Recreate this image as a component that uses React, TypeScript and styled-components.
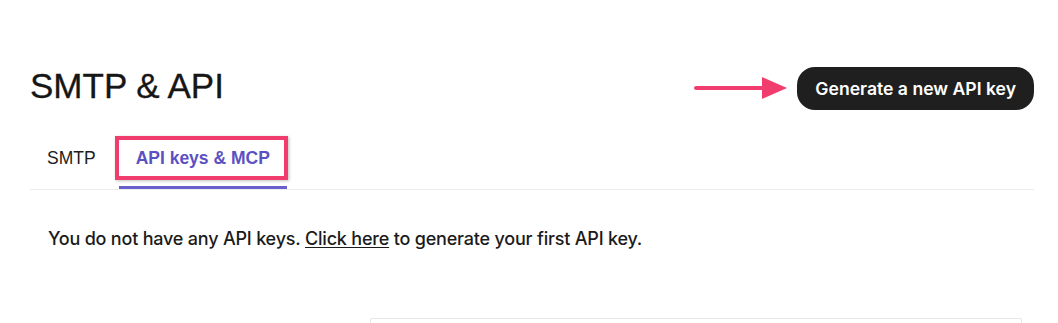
import React, { useState } from 'react'
import styled, { createGlobalStyle } from 'styled-components'

const GlobalStyle = createGlobalStyle`
  html, body {
    margin: 0;
    padding: 0;
    background: #ffffff;
  }

  body {
    font-family: Inter, 'Liberation Sans', sans-serif;
    color: #1b1b1b;
  }
`

const Page = styled.div`
  padding: 66px 24px 0 30px;
  overflow: hidden;
  height: 323px;
  box-sizing: border-box;
`

const Header = styled.header`
  display: flex;
  align-items: center;
  justify-content: space-between;
`

const Title = styled.h1`
  margin: 0 0 4px;
  font-family: 'Liberation Sans', Arial, sans-serif;
  font-size: 35px;
  font-weight: 400;
  color: #161616;
  -webkit-text-stroke: 0.3px #161616;
`

const Actions = styled.div`
  display: flex;
  align-items: center;
  gap: 8px;
`

const PrimaryButton = styled.button`
  height: 43px;
  padding: 0 18px;
  border: none;
  border-radius: 18px;
  background: #1f1f1f;
  color: #ffffff;
  font-family: Inter, 'Liberation Sans', sans-serif;
  font-size: 17.6px;
  font-weight: 600;
  cursor: pointer;
`

const TabList = styled.nav`
  display: flex;
  gap: 6px;
  margin-top: 20px;
  border-bottom: 1px solid #ececec;
`

const Tab = styled.button<{ $active?: boolean }>`
  position: relative;
  height: 59px;
  padding: 0 17px;
  border: none;
  border-bottom: 3px solid ${(p) => (p.$active ? '#6a5fcd' : 'transparent')};
  background: none;
  font-family: 'Liberation Sans', Arial, sans-serif;
  font-size: 17.5px;
  font-weight: ${(p) => (p.$active ? 700 : 400)};
  color: ${(p) => (p.$active ? '#5b51c2' : '#1d1d1d')};
  cursor: pointer;
`

// pink annotation frame drawn over the active tab
const Highlight = styled.span`
  position: absolute;
  left: -4px;
  right: -1px;
  top: 6px;
  height: 44px;
  box-sizing: border-box;
  border: 4px solid #f13d6e;
  box-shadow: 1px 1px 3px rgba(0, 0, 0, 0.25);
  pointer-events: none;
`

const Message = styled.p`
  margin: 36px 0 0 18px;
  font-size: 18px;
  font-weight: 500;
  line-height: 26px;
  color: #1b1b1b;
  letter-spacing: -0.2px;
`

const Link = styled.a`
  color: inherit;
  text-decoration: underline;
  text-underline-offset: 2px;
  cursor: pointer;
`

const Card = styled.div`
  margin: 66px 12px 0 340px;
  height: 40px;
  border: 1px solid #e8e8e8;
  border-radius: 2px;
`

const Arrow = () => (
  <svg width="95" height="26" viewBox="0 0 95 26">
    <line x1="2" y1="13" x2="72" y2="13" stroke="#f13d6e" strokeWidth="4" strokeLinecap="round" />
    <polygon points="68,2 93,13 68,24" fill="#f13d6e" />
  </svg>
)

const App: React.FC = () => {
  const [tab, setTab] = useState('api')

  return (
    <>
      <GlobalStyle />
      <Page>
        <Header>
          <Title>SMTP &amp; API</Title>
          <Actions>
            <Arrow />
            <PrimaryButton>Generate a new API key</PrimaryButton>
          </Actions>
        </Header>

        <TabList>
          <Tab $active={tab === 'smtp'} onClick={() => setTab('smtp')}>
            SMTP
          </Tab>
          <Tab $active={tab === 'api'} onClick={() => setTab('api')}>
            API keys &amp; MCP
            <Highlight />
          </Tab>
        </TabList>

        <Message>
          You do not have any API keys. <Link>Click here</Link> to generate your first API key.
        </Message>

        <Card />
      </Page>
    </>
  )
}

export default App
